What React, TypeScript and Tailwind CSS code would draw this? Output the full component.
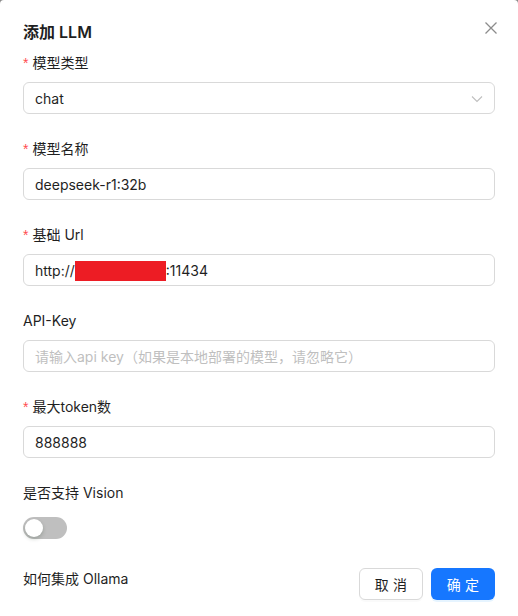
import React from "react";

const font = { fontFamily: '"Inter", "Noto Sans CJK SC", sans-serif' };

function Label({ text, required }: { text: string; required?: boolean }) {
  return (
    <div className="flex items-center h-[22px] mb-2 text-[14px] text-[#1f1f1f] leading-[22px]">
      {required && <span className="text-[#ff4d4f] mr-[4px] text-[14px] leading-none" style={{ fontFamily: "SimSun, sans-serif" }}>*</span>}
      <span>{text}</span>
    </div>
  );
}

function Box({ children }: { children: React.ReactNode }) {
  return (
    <div className="relative h-[32px] border border-[#d9d9d9] rounded-[6px] px-[11px] flex items-center text-[14px] text-[#1f1f1f] bg-white">
      {children}
    </div>
  );
}

export default function App() {
  return (
    <div className="w-[518px] h-[616px] bg-[#8a8a8a] overflow-hidden" style={font}>
      <div className="w-full h-full bg-white rounded-tl-[4px] rounded-tr-[4px] px-[23px] pt-[20px] relative">
        <div className="flex items-center justify-between h-[24px] mb-2">
          <div className="text-[16px] font-semibold text-[#1f1f1f] leading-[24px]">添加 LLM</div>
          <svg className="absolute right-[20px] top-[21px]" width="14" height="14" viewBox="0 0 14 14">
            <path d="M1.5 1.5 L12.5 12.5 M12.5 1.5 L1.5 12.5" stroke="#8c8c8c" strokeWidth="1.3" fill="none" />
          </svg>
        </div>

        <div className="mb-6">
          <Label text="模型类型" required />
          <Box>
            <span>chat</span>
            <svg className="absolute right-[11px] top-[12px]" width="12" height="8" viewBox="0 0 12 8">
              <path d="M1 1.5 L6 6.5 L11 1.5" stroke="#bfbfbf" strokeWidth="1.1" fill="none" />
            </svg>
          </Box>
        </div>

        <div className="mb-6">
          <Label text="模型名称" required />
          <Box>deepseek-r1:32b</Box>
        </div>

        <div className="mb-6">
          <Label text="基础 Url" required />
          <Box>
            <span>http://</span>
            <span className="inline-block w-[91px] h-[20px] bg-[#ed1c24] mt-[1px]"></span>
            <span>:11434</span>
          </Box>
        </div>

        <div className="mb-6">
          <Label text="API-Key" />
          <Box>
            <span className="text-[#bfbfbf]">请输入api key（如果是本地部署的模型，请忽略它）</span>
          </Box>
        </div>

        <div className="mb-6">
          <Label text="最大token数" required />
          <Box>888888</Box>
        </div>

        <div className="mb-6">
          <Label text="是否支持 Vision" />
          <div className="h-[32px] flex items-center">
            <div className="w-[44px] h-[22px] rounded-full bg-[#bfbfbf] relative">
              <div className="absolute left-[2px] top-[2px] w-[18px] h-[18px] rounded-full bg-white shadow-[0_2px_4px_0_rgba(0,35,11,0.2)]"></div>
            </div>
          </div>
        </div>

        <div className="flex items-start justify-between">
          <div className="text-[14px] leading-[22px] text-[#1f1f1f]">如何集成 Ollama</div>
          <div className="flex gap-2">
            <button className="w-[64px] h-[32px] rounded-[6px] border border-[#d9d9d9] bg-white text-[14px] text-[#1f1f1f] shadow-[0_2px_0_rgba(0,0,0,0.02)] tracking-[0.3em] pl-[4px]">取消</button>
            <button className="w-[64px] h-[32px] rounded-[6px] bg-[#1677ff] text-[14px] text-white shadow-[0_2px_0_rgba(5,145,255,0.1)] tracking-[0.3em] pl-[4px]">确定</button>
          </div>
        </div>
      </div>
    </div>
  );
}
